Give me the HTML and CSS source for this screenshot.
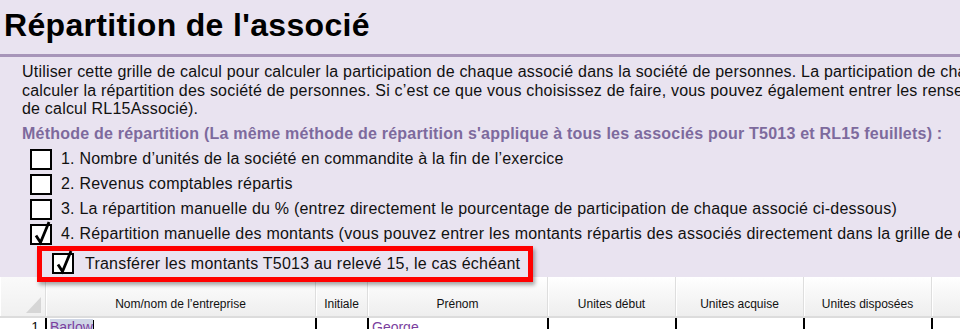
FILE: index.html
```
<!DOCTYPE html>
<html lang="fr">
<head>
<meta charset="utf-8">
<title>Répartition de l'associé</title>
<link rel="stylesheet" href="styles.css">
</head>
<body>
<div class="page">
  <header class="title-bar">
    <h1 class="title">Répartition de l'associé</h1>
  </header>
  <p class="intro">Utiliser cette grille de calcul pour calculer la participation de chaque associé dans la société de personnes. La participation de chaque associé peut servir à<br>calculer la répartition des société de personnes. Si c’est ce que vous choisissez de faire, vous pouvez également entrer les renseignements dans la grille<br>de calcul RL15Associé).</p>
  <h2 class="method">Méthode de répartition (La même méthode de répartition s'applique à tous les associés pour T5013 et RL15 feuillets) :</h2>
  <ul class="options">
    <li class="option"><span class="box"></span><span>1. Nombre d’unités de la société en commandite à la fin de l’exercice</span></li>
    <li class="option"><span class="box"></span><span>2. Revenus comptables répartis</span></li>
    <li class="option"><span class="box"></span><span>3. La répartition manuelle du % (entrez directement le pourcentage de participation de chaque associé ci-dessous)</span></li>
    <li class="option"><span class="box checked"><svg class="tick" viewBox="0 0 22 26" width="22" height="26"><path d="M5 15.5 L9.5 22.5 L18 2" fill="none" stroke="#000" stroke-width="2.8" stroke-linejoin="miter"/></svg></span><span>4. Répartition manuelle des montants (vous pouvez entrer les montants répartis des associés directement dans la grille de calcul)</span></li>
  </ul>
  <div class="highlight">
    <span class="box checked"><svg class="tick" viewBox="0 0 22 26" width="22" height="26"><path d="M5 15.5 L9.5 22.5 L18 2" fill="none" stroke="#000" stroke-width="2.8" stroke-linejoin="miter"/></svg></span>
    <span>Transférer les montants T5013 au relevé 15, le cas échéant</span>
  </div>
  <div class="grid">
    <div class="hcell corner"><span class="corner-tri"></span></div>
    <div class="hcell">Nom/nom de l’entreprise</div>
    <div class="hcell">Initiale</div>
    <div class="hcell">Prénom</div>
    <div class="hcell">Unites début</div>
    <div class="hcell">Unites acquise</div>
    <div class="hcell">Unites disposées</div>
    <div class="hcell"></div>

    <div class="cell rownum">1</div>
    <div class="cell name"><span class="sel">Barlow</span><span class="caret"></span></div>
    <div class="cell"></div>
    <div class="cell name">George</div>
    <div class="cell"></div>
    <div class="cell"></div>
    <div class="cell"></div>
    <div class="cell"></div>
  </div>
</div>
</body>
</html>
```
FILE: styles.css
```
html, body {
  margin: 0;
  padding: 0;
}
body {
  background: #e9e3f0;
  font-family: "Liberation Sans", Arial, sans-serif;
  color: #111;
  overflow: hidden;
  width: 960px;
  height: 329px;
}
.page {
  display: flex;
  flex-direction: column;
}
.title-bar {
  height: 54px;
  border-bottom: 3px solid #a795b9;
}
.title {
  margin: 0;
  padding: 5px 0 0 4px;
  font-size: 32px;
  line-height: 40px;
  font-weight: bold;
  letter-spacing: 0.33px;
  color: #000;
  white-space: nowrap;
}
.intro {
  margin: 6px 0 0 22px;
  font-size: 16px;
  line-height: 18.5px;
  letter-spacing: 0.2px;
  white-space: nowrap;
}
.method {
  margin: 6px 0 0 22px;
  font-size: 16px;
  line-height: 18px;
  font-weight: bold;
  letter-spacing: 0.22px;
  color: #7d6a9d;
  white-space: nowrap;
}
.options {
  list-style: none;
  margin: 4px 0 0 0;
  padding: 0 0 0 30px;
}
.option {
  display: flex;
  align-items: center;
  gap: 9px;
  height: 25px;
  font-size: 16px;
  letter-spacing: 0.22px;
  white-space: nowrap;
}
.box {
  position: relative;
  flex: none;
  width: 18px;
  height: 17px;
  border: 2px solid #000;
  background: #fff;
}
.tick {
  position: absolute;
  left: -1px;
  top: -6px;
}
.highlight {
  position: relative;
  z-index: 2;
  display: flex;
  align-items: center;
  gap: 11px;
  align-self: flex-start;
  box-sizing: border-box;
  width: 496px;
  height: 36px;
  margin: -1px 0 -5px 37px;
  padding-left: 10px;
  border: 5px solid #f00;
  background: #e9e3f0;
  box-shadow: 2px 3px 4px rgba(0, 0, 0, 0.35);
  font-size: 16px;
  letter-spacing: 0.22px;
  white-space: nowrap;
}
.grid {
  display: grid;
  grid-template-columns: 45px 270px 52px 180px 128px 128px 128px 1fr;
  grid-template-rows: 41px 30px;
  background: #fff;
}
.hcell {
  box-sizing: border-box;
  padding-top: 20px;
  font-size: 12px;
  line-height: 14px;
  text-align: center;
  color: #111;
  white-space: nowrap;
  background: linear-gradient(#ffffff 0%, #fbfbfb 20%, #eeeeee 100%);
  border-left: 1px solid #dedede;
  box-shadow: inset 1px 0 0 #fff;
  border-bottom: 2px solid #dcdcdc;
}
.hcell.corner {
  position: relative;
  border-left: none;
  background: linear-gradient(#fafafa, #f0f0f0);
}
.corner-tri {
  position: absolute;
  right: 4px;
  bottom: 3px;
  width: 0;
  height: 0;
  border-left: 15px solid transparent;
  border-bottom: 16px solid #d6d6d6;
}
.cell {
  box-sizing: border-box;
  font-size: 14px;
  line-height: 18px;
  padding: 0 3px;
  border-left: 2px solid #000;
  white-space: nowrap;
}
.cell.rownum {
  border-left: none;
  text-align: right;
  padding-right: 6px;
  color: #111;
}
.cell.name {
  color: #7b3f9e;
}
.sel {
  background: #cfd6e6;
}
.caret {
  display: inline-block;
  width: 1px;
  height: 14px;
  background: #000;
  vertical-align: -2px;
}
```
